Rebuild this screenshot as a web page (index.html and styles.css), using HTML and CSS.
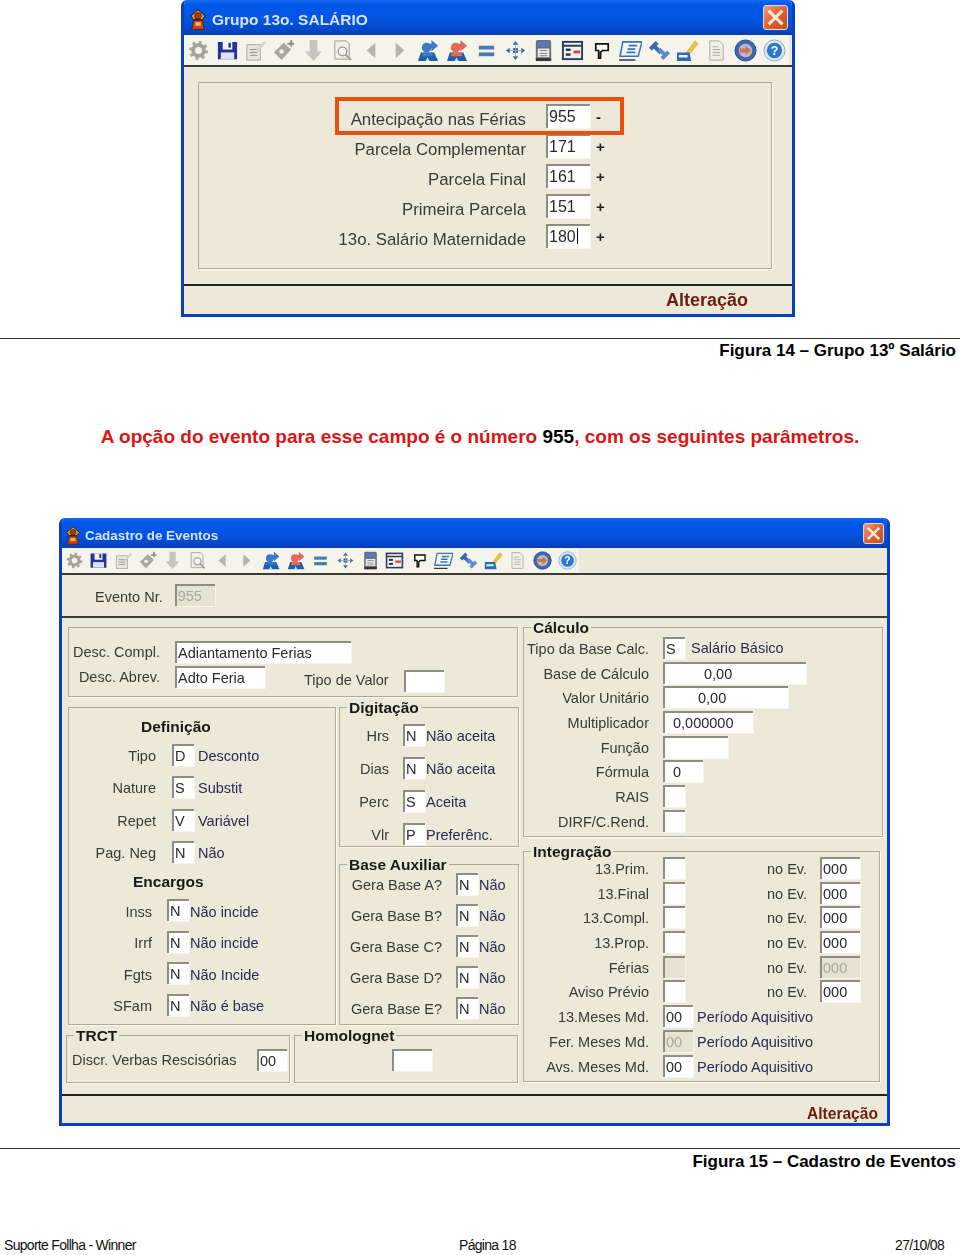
FILE: index.html
```html
<!DOCTYPE html>
<html lang="pt-BR">

<head>
    <meta charset="UTF-8">
    <meta name="viewport" content="width=device-width, initial-scale=1.0">
    <title>Suporte Follha - Winner</title>
    <link rel="stylesheet" href="styles.css">
</head>

<body>

<svg class="sprites" width="0" height="0" aria-hidden="true">
    <symbol id="i-logo" viewBox="0 0 20 24">
        <path d="M10 1 18 8 15 12 5 12 2 8z" fill="#d9a52e" stroke="#33281c" stroke-width="1.2"/>
        <circle cx="10" cy="8" r="3.6" fill="#c2300f" stroke="#33281c"/>
        <path d="M5 13h10l2 10H3z" fill="#d63c1a" stroke="#33281c"/>
        <rect x="7" y="15" width="6" height="4" fill="#eec24a"/>
    </symbol>
    <symbol id="i-gear" viewBox="0 0 24 24">
        <circle cx="12" cy="12" r="5.6" fill="none" stroke="#a4a49c" stroke-width="4"/>
        <circle cx="12" cy="12" r="8.4" fill="none" stroke="#a4a49c" stroke-width="3" stroke-dasharray="3 3.6"/>
    </symbol>
    <symbol id="i-save" viewBox="0 0 24 24">
        <path d="M2 3h20v18H2z" fill="#22349c"/>
        <rect x="7" y="3" width="10" height="8" fill="#f4f4fa"/>
        <rect x="13" y="4" width="2.5" height="5" fill="#22349c"/>
        <rect x="5" y="14" width="14" height="7" fill="#dfe2f4"/>
    </symbol>
    <symbol id="i-edit" viewBox="0 0 24 24">
        <rect x="3" y="6" width="14" height="16" fill="#e8e6dc" stroke="#a8a8a0"/>
        <path d="M6 11h8M6 14h8M6 17h8" stroke="#8f8f88"/>
        <path d="M13 11 21 2l2 2-8 9z" fill="#d4d3ca"/>
    </symbol>
    <symbol id="i-tag" viewBox="0 0 24 24">
        <path d="M1 14 11 4l8 7-10 11z" fill="#a8a8a0"/>
        <circle cx="9" cy="13" r="2.4" fill="#f0eee4"/>
        <path d="M15 5h7M19 1v7" stroke="#8c8c84" stroke-width="2"/>
    </symbol>
    <symbol id="i-down" viewBox="0 0 24 24">
        <path d="M8 1h8v12h5l-9 10-9-10h5z" fill="#c6c6be"/>
    </symbol>
    <symbol id="i-find" viewBox="0 0 24 24">
        <path d="M4 2h12l3 3v16H4z" fill="#f2f0e8" stroke="#9c9c94"/>
        <circle cx="12" cy="13" r="4.5" fill="#f8f8f2" stroke="#9c9c94" stroke-width="1.5"/>
        <path d="M15 16l6 6" stroke="#a0a098" stroke-width="2"/>
    </symbol>
    <symbol id="i-left" viewBox="0 0 24 24">
        <path d="M16 4v16L7 12z" fill="#b4b4ac"/>
    </symbol>
    <symbol id="i-right" viewBox="0 0 24 24">
        <path d="M8 4v16l9-8z" fill="#b4b4ac"/>
    </symbol>
    <symbol id="i-user" viewBox="0 0 24 24">
        <path d="M1 23l3-9h14l4 9z" fill="#1f5fa8"/>
        <path d="M6 14h10l1 4H5z" fill="currentColor"/>
        <circle cx="10" cy="9" r="5" fill="currentColor"/>
        <path d="M11 5h4V1l7 6-7 6V9h-4z" fill="currentColor"/>
        <path d="M9 23l2-4 2 4z" fill="#cfe0f4"/>
    </symbol>
    <symbol id="i-equal" viewBox="0 0 24 24">
        <rect x="4" y="7" width="16" height="4" fill="#4c78b4"/>
        <rect x="4" y="14" width="16" height="4" fill="#4c78b4"/>
    </symbol>
    <symbol id="i-move" viewBox="0 0 24 24">
        <path d="M12 2l3 4H9zM12 22l-3-4h6zM2 12l4-3v6zM22 12l-4 3V9z" fill="#3c6c9c"/>
        <rect x="9.5" y="9.5" width="5" height="5" fill="#3c5c84"/>
        <path d="M6 12h12M12 6v12" stroke="#8cacc8"/>
    </symbol>
    <symbol id="i-calc" viewBox="0 0 24 24">
        <rect x="4" y="1" width="16" height="22" rx="2" fill="#6c7076"/>
        <rect x="6" y="3" width="12" height="5" fill="#4f7cc4"/>
        <rect x="6" y="10" width="12" height="9" fill="#ecece4"/>
        <path d="M8 12h8M8 15h8M8 17.5h8" stroke="#7c8088"/>
        <rect x="4" y="20" width="16" height="3" fill="#33363a"/>
    </symbol>
    <symbol id="i-grid" viewBox="0 0 24 24">
        <rect x="2" y="3" width="20" height="18" fill="#f2f2ea" stroke="#2c3c5c" stroke-width="2"/>
        <path d="M2 7h20" stroke="#2c3c5c" stroke-width="2"/>
        <rect x="13" y="12" width="7" height="3" fill="#d84848"/>
        <rect x="5" y="10" width="5" height="2.5" fill="#26323f"/>
        <rect x="5" y="15" width="5" height="2.5" fill="#26323f"/>
    </symbol>
    <symbol id="i-note" viewBox="0 0 24 24">
        <path d="M6 5h13v7h-6l-2 2v6H9v-8H6z" fill="#fff" stroke="#111" stroke-width="1.8"/>
    </symbol>
    <symbol id="i-scroll" viewBox="0 0 24 24">
        <path d="M4 3h20l-4 15H1z" fill="#f4f4f0" stroke="#3a74b4" stroke-width="1.6"/>
        <path d="M10 7h9M9 10.5h8M8 14h9" stroke="#3a74b4" stroke-width="1.8"/>
        <path d="M0 22h17" stroke="#33383c" stroke-width="1.6"/>
    </symbol>
    <symbol id="i-swap" viewBox="0 0 24 24">
        <path d="M1 9l7-7 3 3-2 2 6 6-3 3-6-6-2 2z" fill="#3468b4"/>
        <path d="M23 15l-7 7-3-3 2-2-5-5 3-3 5 5 2-2z" fill="#5c8cd0"/>
    </symbol>
    <symbol id="i-pencil" viewBox="0 0 24 24">
        <path d="M10 15 20 2l3 3-10 12z" fill="#f2c338" stroke="#c89a20" stroke-width=".6"/>
        <path d="M1 14h13l2 9H1z" fill="#2c6cb4"/>
        <path d="M3 18h9" stroke="#eef2fa" stroke-width="2.4"/>
    </symbol>
    <symbol id="i-doc" viewBox="0 0 24 24">
        <path d="M5 2h10l4 4v16H5z" fill="#f2f0e8" stroke="#a8a8a0"/>
        <path d="M8 8h6M8 11h8M8 14h8M8 17h8" stroke="#a8a8a0"/>
    </symbol>
    <symbol id="i-go" viewBox="0 0 24 24">
        <circle cx="12" cy="12" r="11" fill="#4468ac" stroke="#2c4488"/>
        <circle cx="12" cy="12" r="7" fill="#b4bcd0"/>
        <path d="M6 10h6V7l6 5-6 5v-3H6z" fill="#d8704c"/>
    </symbol>
    <symbol id="i-help" viewBox="0 0 24 24">
        <circle cx="12" cy="12" r="11" fill="#dde6f2" stroke="#8ca8cc"/>
        <circle cx="12" cy="12" r="8" fill="#2f78c8"/>
    </symbol>
</svg>

<!-- figura 14 -->
<section class="window win-grupo">
    <div class="titlebar">
        <svg class="logo"><use href="#i-logo"/></svg>
        <span class="title">Grupo 13o. SALÁRIO</span>
        <span class="close"><svg viewBox="0 0 20 20"><path d="M4 4 16 16M16 4 4 16" stroke="#fde8dc" stroke-width="2.6"/></svg></span>
    </div>
    <div class="toolbar">
        <span class="tool"><svg><use href="#i-gear"/></svg></span>
        <span class="tool"><svg><use href="#i-save"/></svg></span>
        <span class="tool"><svg><use href="#i-edit"/></svg></span>
        <span class="tool"><svg><use href="#i-tag"/></svg></span>
        <span class="tool"><svg><use href="#i-down"/></svg></span>
        <span class="tool"><svg><use href="#i-find"/></svg></span>
        <span class="tool"><svg><use href="#i-left"/></svg></span>
        <span class="tool"><svg><use href="#i-right"/></svg></span>
        <span class="tool blue"><svg><use href="#i-user"/></svg></span>
        <span class="tool red"><svg><use href="#i-user"/></svg></span>
        <span class="tool"><svg><use href="#i-equal"/></svg></span>
        <span class="tool"><svg><use href="#i-move"/></svg></span>
        <span class="tool"><svg><use href="#i-calc"/></svg></span>
        <span class="tool"><svg><use href="#i-grid"/></svg></span>
        <span class="tool"><svg><use href="#i-note"/></svg></span>
        <span class="tool"><svg><use href="#i-scroll"/></svg></span>
        <span class="tool"><svg><use href="#i-swap"/></svg></span>
        <span class="tool"><svg><use href="#i-pencil"/></svg></span>
        <span class="tool"><svg><use href="#i-doc"/></svg></span>
        <span class="tool"><svg><use href="#i-go"/></svg></span>
        <span class="tool"><svg viewBox="0 0 24 24"><use href="#i-help"/><text x="12" y="17" text-anchor="middle" class="help-mark">?</text></svg></span>
    </div>
    <div class="client">
        <div class="group grupo-box">
            <div class="highlight"></div>
            <div class="row"><span class="lbl">Antecipação nas Férias</span><span class="field">955</span><span class="sign">-</span></div>
            <div class="row"><span class="lbl">Parcela Complementar</span><span class="field">171</span><span class="sign">+</span></div>
            <div class="row"><span class="lbl">Parcela Final</span><span class="field">161</span><span class="sign">+</span></div>
            <div class="row"><span class="lbl">Primeira Parcela</span><span class="field">151</span><span class="sign">+</span></div>
            <div class="row"><span class="lbl">13o. Salário Maternidade</span><span class="field caret">180</span><span class="sign">+</span></div>
        </div>
    </div>
    <div class="statusbar">Alteração</div>
</section>

<div class="caption cap-14">Figura 14 – Grupo 13º Salário</div>

<p class="lead">A opção do evento para esse campo é o número <span class="num">955</span>, com os seguintes parâmetros.</p>

<!-- figura 15 -->
<section class="window win-eventos">
    <div class="titlebar">
        <svg class="logo"><use href="#i-logo"/></svg>
        <span class="title">Cadastro de Eventos</span>
        <span class="close"><svg viewBox="0 0 20 20"><path d="M4 4 16 16M16 4 4 16" stroke="#fde8dc" stroke-width="2.6"/></svg></span>
    </div>
    <div class="toolbar">
        <span class="tool"><svg><use href="#i-gear"/></svg></span>
        <span class="tool"><svg><use href="#i-save"/></svg></span>
        <span class="tool"><svg><use href="#i-edit"/></svg></span>
        <span class="tool"><svg><use href="#i-tag"/></svg></span>
        <span class="tool"><svg><use href="#i-down"/></svg></span>
        <span class="tool"><svg><use href="#i-find"/></svg></span>
        <span class="tool"><svg><use href="#i-left"/></svg></span>
        <span class="tool"><svg><use href="#i-right"/></svg></span>
        <span class="tool blue"><svg><use href="#i-user"/></svg></span>
        <span class="tool red"><svg><use href="#i-user"/></svg></span>
        <span class="tool"><svg><use href="#i-equal"/></svg></span>
        <span class="tool"><svg><use href="#i-move"/></svg></span>
        <span class="tool"><svg><use href="#i-calc"/></svg></span>
        <span class="tool"><svg><use href="#i-grid"/></svg></span>
        <span class="tool"><svg><use href="#i-note"/></svg></span>
        <span class="tool"><svg><use href="#i-scroll"/></svg></span>
        <span class="tool"><svg><use href="#i-swap"/></svg></span>
        <span class="tool"><svg><use href="#i-pencil"/></svg></span>
        <span class="tool"><svg><use href="#i-doc"/></svg></span>
        <span class="tool"><svg><use href="#i-go"/></svg></span>
        <span class="tool"><svg viewBox="0 0 24 24"><use href="#i-help"/><text x="12" y="17" text-anchor="middle" class="help-mark">?</text></svg></span>
    </div>

    <div class="evento-nr">
        <span class="lbl">Evento Nr.</span><span class="field w40 off">955</span>
    </div>

    <div class="form">
        <div class="col-left">
            <div class="group g-desc">
                <div class="row"><span class="lbl">Desc. Compl.</span><span class="field w176">Adiantamento Ferias</span></div>
                <div class="row"><span class="lbl">Desc. Abrev.</span><span class="field w90">Adto Feria</span><span class="lbl-tipo">Tipo de Valor</span><span class="field w40"></span></div>
            </div>

            <div class="mid">
                <div class="group g-def">
                    <div class="heading h-def">Definição</div>
                    <div class="rows r-def">
                        <div class="row"><span class="lbl">Tipo</span><span class="field">D</span><span class="desc">Desconto</span></div>
                        <div class="row"><span class="lbl">Nature</span><span class="field">S</span><span class="desc">Substit</span></div>
                        <div class="row"><span class="lbl">Repet</span><span class="field">V</span><span class="desc">Variável</span></div>
                        <div class="row"><span class="lbl">Pag. Neg</span><span class="field">N</span><span class="desc">Não</span></div>
                    </div>
                    <div class="heading h-enc">Encargos</div>
                    <div class="rows r-enc">
                        <div class="row"><span class="lbl">Inss</span><span class="field">N</span><span class="desc">Não incide</span></div>
                        <div class="row"><span class="lbl">Irrf</span><span class="field">N</span><span class="desc">Não incide</span></div>
                        <div class="row"><span class="lbl">Fgts</span><span class="field">N</span><span class="desc">Não Incide</span></div>
                        <div class="row"><span class="lbl">SFam</span><span class="field">N</span><span class="desc">Não é base</span></div>
                    </div>
                </div>

                <div class="mid-right">
                    <div class="group g-dig">
                        <div class="legend">Digitação</div>
                        <div class="row"><span class="lbl">Hrs</span><span class="field">N</span><span class="desc">Não aceita</span></div>
                        <div class="row"><span class="lbl">Dias</span><span class="field">N</span><span class="desc">Não aceita</span></div>
                        <div class="row"><span class="lbl">Perc</span><span class="field">S</span><span class="desc">Aceita</span></div>
                        <div class="row"><span class="lbl">Vlr</span><span class="field">P</span><span class="desc">Preferênc.</span></div>
                    </div>
                    <div class="group g-aux">
                        <div class="legend">Base Auxiliar</div>
                        <div class="row"><span class="lbl">Gera Base A?</span><span class="field">N</span><span class="desc">Não</span></div>
                        <div class="row"><span class="lbl">Gera Base B?</span><span class="field">N</span><span class="desc">Não</span></div>
                        <div class="row"><span class="lbl">Gera Base C?</span><span class="field">N</span><span class="desc">Não</span></div>
                        <div class="row"><span class="lbl">Gera Base D?</span><span class="field">N</span><span class="desc">Não</span></div>
                        <div class="row"><span class="lbl">Gera Base E?</span><span class="field">N</span><span class="desc">Não</span></div>
                    </div>
                </div>
            </div>

            <div class="bottom">
                <div class="group g-trct">
                    <div class="legend">TRCT</div>
                    <div class="row"><span class="lbl">Discr. Verbas Rescisórias</span><span class="field w30">00</span></div>
                </div>
                <div class="group g-homo">
                    <div class="legend">Homolognet</div>
                    <span class="field w40"></span>
                </div>
            </div>
        </div>

        <div class="col-right">
            <div class="group g-calc">
                <div class="legend">Cálculo</div>
                <div class="row"><span class="lbl">Tipo da Base Calc.</span><span class="field">S</span><span class="desc">Salário Básico</span></div>
                <div class="row"><span class="lbl">Base de Cálculo</span><span class="field w143 pad40">0,00</span></div>
                <div class="row"><span class="lbl">Valor Unitário</span><span class="field w125 pad34">0,00</span></div>
                <div class="row"><span class="lbl">Multiplicador</span><span class="field w90 pad8">0,000000</span></div>
                <div class="row"><span class="lbl">Função</span><span class="field w65"></span></div>
                <div class="row"><span class="lbl">Fórmula</span><span class="field w40 pad8">0</span></div>
                <div class="row"><span class="lbl">RAIS</span><span class="field"></span></div>
                <div class="row"><span class="lbl">DIRF/C.Rend.</span><span class="field"></span></div>
            </div>
            <div class="group g-int">
                <div class="legend">Integração</div>
                <div class="row"><span class="lbl">13.Prim.</span><span class="field"></span><span class="lbl-ev">no Ev.</span><span class="field w40">000</span></div>
                <div class="row"><span class="lbl">13.Final</span><span class="field"></span><span class="lbl-ev">no Ev.</span><span class="field w40">000</span></div>
                <div class="row"><span class="lbl">13.Compl.</span><span class="field"></span><span class="lbl-ev">no Ev.</span><span class="field w40">000</span></div>
                <div class="row"><span class="lbl">13.Prop.</span><span class="field"></span><span class="lbl-ev">no Ev.</span><span class="field w40">000</span></div>
                <div class="row"><span class="lbl">Férias</span><span class="field off"></span><span class="lbl-ev">no Ev.</span><span class="field w40 off">000</span></div>
                <div class="row"><span class="lbl">Aviso Prévio</span><span class="field"></span><span class="lbl-ev">no Ev.</span><span class="field w40">000</span></div>
                <div class="row"><span class="lbl">13.Meses Md.</span><span class="field w30">00</span><span class="desc">Período Aquisitivo</span></div>
                <div class="row"><span class="lbl">Fer. Meses Md.</span><span class="field w30 off">00</span><span class="desc">Período Aquisitivo</span></div>
                <div class="row"><span class="lbl">Avs. Meses Md.</span><span class="field w30">00</span><span class="desc">Período Aquisitivo</span></div>
            </div>
        </div>
    </div>

    <div class="statusbar">Alteração</div>
</section>

<div class="caption cap-15">Figura 15 – Cadastro de Eventos</div>

<footer class="page-foot">
    <span class="foot-left">Suporte Follha - Winner</span>
    <span class="foot-mid">Página 18</span>
    <span>27/10/08</span>
</footer>

</body>
</html>
```

FILE: styles.css
```css
body {
    margin: 0;
    height: 1255px;
    overflow: hidden;
    background-color: #fff;
    color: #000;
    font-family: "Liberation Sans", Arial, sans-serif;
}

.sprites {
    position: absolute;
}

.help-mark {
    font: bold 13px "Liberation Sans", sans-serif;
    fill: #fff;
}

/* window frame */
.window {
    box-sizing: border-box;
    display: flex;
    flex-direction: column;
    background-color: #ece9d8;
    border: 3px solid #0a3fc0;
    border-top: 0;
    border-radius: 6px 6px 0 0;
    filter: blur(0.45px);
    overflow: hidden;
}

.win-grupo {
    width: 614px;
    height: 317px;
    margin-left: 181px;
}

.win-eventos {
    width: 831px;
    height: 608px;
    margin: 0 0 0 59px;
}

.titlebar {
    display: flex;
    align-items: center;
    margin: 0 -3px;
    background: linear-gradient(#1a6cf0, #0058e8 12%, #0454e4 55%, #0348c8 85%, #0a3cb0);
}

.win-grupo .titlebar {
    height: 36px;
    padding: 4px 7px 0 8px;
    box-sizing: border-box;
}

.win-eventos .titlebar {
    height: 30px;
    padding: 4px 6px 0 6px;
    box-sizing: border-box;
}

.logo {
    flex: none;
}

.win-grupo .logo {
    width: 18px;
    height: 23px;
    margin-right: 5px;
}

.win-eventos .logo {
    width: 16px;
    height: 19px;
    margin-right: 4px;
}

.title {
    flex: 1;
    color: #d3e5fd;
    font-weight: bold;
}

.win-grupo .title {
    font-size: 15.5px;
}

.win-eventos .title {
    font-size: 13.4px;
}

.close {
    display: flex;
    box-sizing: border-box;
    background: linear-gradient(135deg, #f0a080, #e0602e 50%, #c84c1c);
    border: 1px solid #d8dce8;
    border-radius: 3px;
}

.win-grupo .close {
    width: 25px;
    height: 25px;
    margin-top: -4px;
}

.win-eventos .close {
    width: 21px;
    height: 21px;
    margin-top: -3px;
}

.toolbar {
    display: flex;
    flex: none;
    box-sizing: border-box;
    border-bottom: 2px solid #3c3c34;
}

.win-grupo .toolbar {
    height: 32px;
}

.win-eventos .toolbar {
    height: 27px;
}

.tool {
    display: flex;
    align-items: center;
    justify-content: center;
    background-color: #f5f4eb;
}

.win-grupo .tool {
    width: 28.8px;
}

.win-eventos .tool {
    width: 24.65px;
}

.tool svg {
    display: block;
}

.win-grupo .tool svg {
    width: 23px;
    height: 23px;
}

.win-eventos .tool svg {
    width: 19px;
    height: 19px;
}

.tool.blue {
    color: #3a78c8;
}

.tool.red {
    color: #e0685c;
}

.statusbar {
    flex: none;
    box-sizing: border-box;
    border-top: 2px solid #23231e;
    color: #6e1c10;
    font-weight: bold;
    text-align: right;
}

.win-grupo .statusbar {
    height: 30px;
    padding: 4px 44px 0 0;
    font-size: 18px;
}

.win-eventos .statusbar {
    height: 29px;
    padding: 9px 9px 0 0;
    font-size: 15.6px;
}

/* shared form pieces */
.group {
    position: relative;
    box-sizing: border-box;
    border: 1px solid #aeaa98;
    box-shadow: 1px 1px 0 #fbfaf4;
}

.legend {
    position: absolute;
    top: -9px;
    left: 7px;
    padding: 0 2px;
    background-color: #ece9d8;
    color: #1a1a1a;
    font-size: 15.5px;
    font-weight: bold;
    line-height: 17px;
}

.heading {
    color: #1a1a1a;
    font-size: 15.5px;
    font-weight: bold;
    line-height: 20px;
}

.row {
    display: flex;
    align-items: center;
}

.lbl {
    flex: none;
    padding-top: 2px;
    color: #3a3a3a;
    text-align: right;
    white-space: nowrap;
}

.field {
    flex: none;
    box-sizing: border-box;
    width: 22px;
    height: 22px;
    padding-left: 1px;
    background-color: #fff;
    border-top: 2px solid #8d8d84;
    border-left: 2px solid #8d8d84;
    box-shadow: 1px 1px 0 #f7f6ee;
    color: #2a2a2a;
    line-height: 20px;
    white-space: nowrap;
    overflow: hidden;
}

.field.off {
    background-color: #e6e3d3;
    color: #a8a89c;
}

.desc {
    padding-top: 2px;
    color: #2b2b55;
    white-space: nowrap;
}

.w30 { width: 30px; }
.w40 { width: 40px; }
.w65 { width: 65px; }
.w90 { width: 90px; }
.w125 { width: 125px; }
.w143 { width: 143px; }
.w176 { width: 176px; }

.pad8 { padding-left: 8px; }
.pad34 { padding-left: 33px; }
.pad40 { padding-left: 39px; }

/* grupo 13o */
.win-grupo .client {
    flex: 1;
    padding: 15px 20px 15px 14px;
}

.grupo-box {
    height: 187px;
    padding: 21px 0 0 0;
    display: flex;
    flex-direction: column;
    gap: 6px;
}

.highlight {
    position: absolute;
    left: 136px;
    top: 14px;
    width: 289px;
    height: 38px;
    box-sizing: border-box;
    border: 4px solid #e8500f;
}

.grupo-box .row {
    height: 24px;
    font-size: 16.8px;
}

.grupo-box .lbl {
    width: 327px;
    margin-right: 20px;
    padding-top: 7px;
}

.grupo-box .field {
    width: 44px;
    height: 24px;
    font-size: 16px;
    line-height: 21px;
}

/* text cursor in the focused edit */
.caret::after {
    content: "";
    display: inline-block;
    width: 1px;
    height: 16px;
    margin-left: 1px;
    background-color: #000;
    vertical-align: -2px;
}

.sign {
    margin-left: 6px;
    color: #222;
    font-size: 15px;
    font-weight: bold;
}

/* cadastro de eventos */
.evento-nr {
    display: flex;
    align-items: center;
    flex: none;
    box-sizing: border-box;
    height: 43px;
    padding: 0 0 2px 33px;
    font-size: 14.5px;
    border-bottom: 2px solid #3c3c34;
}

.evento-nr .lbl {
    margin-right: 12px;
    padding-top: 4px;
}

.form {
    display: flex;
    flex: 1;
    gap: 4px;
    padding: 9px 0 0 4px;
    font-size: 14.5px;
}

.col-left {
    width: 453px;
}

.col-right {
    display: flex;
    flex-direction: column;
    gap: 14px;
    width: 360px;
}

.g-desc {
    width: 450px;
    height: 70px;
    padding-top: 11px;
    margin-left: 2px;
}

.g-desc .row {
    height: 25px;
}

.g-desc .lbl {
    width: 91px;
    margin-right: 15px;
    padding-top: 0;
}

.lbl-tipo {
    margin: 6px 15px 0 39px;
    color: #3a3a3a;
}

.g-desc .row + .row .field:last-child {
    margin-top: 8px;
}

.mid {
    display: flex;
    gap: 3px;
    margin: 10px 0 10px 2px;
}

.g-def {
    width: 268px;
    height: 318px;
}

.h-def {
    margin: 9px 0 0 72px;
}

.r-def {
    display: flex;
    flex-direction: column;
    gap: 10.4px;
    margin-top: 7px;
}

.r-def .lbl {
    width: 87px;
    margin-right: 16px;
}

.r-def .desc {
    margin-left: 4px;
}

.h-enc {
    margin: 9px 0 0 64px;
}

.r-enc {
    display: flex;
    flex-direction: column;
    gap: 9.5px;
    margin-top: 7px;
}

.r-enc .lbl {
    width: 83px;
    margin-right: 15px;
    padding-top: 3px;
}

.r-enc .desc {
    margin-left: 1px;
    padding-top: 3px;
}

.mid-right {
    display: flex;
    flex-direction: column;
    gap: 17px;
    width: 180px;
}

.g-dig {
    display: flex;
    flex-direction: column;
    gap: 11px;
    height: 140px;
    padding-top: 16px;
}

.g-dig .lbl {
    width: 49px;
    margin-right: 14px;
}

.g-dig .desc {
    margin-left: 1px;
}

.g-aux {
    display: flex;
    flex-direction: column;
    gap: 9px;
    height: 161px;
    padding-top: 8px;
}

.g-aux .lbl {
    width: 102px;
    margin-right: 14px;
}

.g-aux .desc {
    margin-left: 1px;
}

.bottom {
    display: flex;
    gap: 4px;
}

.g-trct {
    width: 224px;
    height: 48px;
    padding: 13px 0 0 5px;
}

.g-trct .lbl {
    width: 168px;
    margin-right: 17px;
    padding-top: 0;
    text-align: left;
}

.g-homo {
    width: 224px;
    height: 48px;
    padding: 13px 0 0 97px;
}

.g-homo .field {
    display: block;
}

.g-calc {
    height: 210px;
    padding-top: 9px;
    display: flex;
    flex-direction: column;
    gap: 2.7px;
}

.g-calc .lbl,
.g-int .lbl {
    width: 125px;
    margin-right: 14px;
}

.g-calc .desc {
    margin-left: 6px;
    padding-top: 0;
}

.g-int {
    width: 357px;
    height: 231px;
    padding-top: 5px;
    display: flex;
    flex-direction: column;
    gap: 2.7px;
}

.g-int .desc {
    margin-left: 4px;
}

.lbl-ev {
    width: 122px;
    margin-right: 13px;
    padding-top: 2px;
    color: #3a3a3a;
    text-align: right;
}

/* page text */
.caption {
    border-top: 1px solid #333;
    padding: 2px 4px 0 0;
    font-size: 17px;
    font-weight: bold;
    line-height: 19px;
    text-align: right;
}

.cap-14 {
    margin-top: 21px;
}

.cap-15 {
    margin-top: 22px;
    padding-top: 3px;
}

.lead {
    margin: 66px 0 70px;
    color: #dc1414;
    font-size: 19px;
    font-weight: bold;
    line-height: 22px;
    text-align: center;
}

.num {
    color: #000;
}

.page-foot {
    display: flex;
    margin-top: 66px;
    padding: 0 16px 0 4px;
    color: #111;
    font-size: 14px;
    letter-spacing: -0.7px;
    line-height: 17px;
}

.foot-left {
    width: 455px;
}

.foot-mid {
    flex: 1;
}
```
